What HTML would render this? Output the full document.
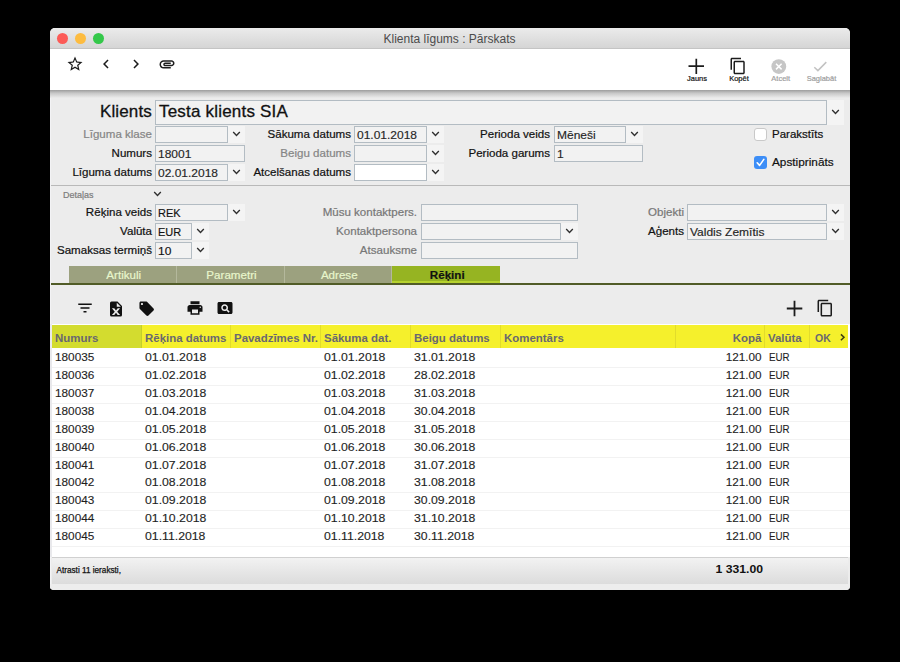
<!DOCTYPE html>
<html>
<head>
<meta charset="utf-8">
<title>Klienta līgums : Pārskats</title>
<style>
html,body{margin:0;padding:0;background:#000;}
body{width:900px;height:662px;position:relative;overflow:hidden;font-family:"Liberation Sans",sans-serif;font-size:12px;color:#111;}
*{box-sizing:border-box;}
.a{position:absolute;white-space:nowrap;}
#win{left:50px;top:28px;width:800px;height:562px;background:#ececec;border-radius:5px 5px 4px 4px;overflow:hidden;}
#tb{left:0;top:0;width:800px;height:21px;background:linear-gradient(#ebebeb,#d5d5d5);border-bottom:1px solid #c4c4c4;}
#title{left:0;top:0;width:799px;height:21px;line-height:23px;text-align:center;font-size:12px;color:#4b4b4b;}
.dot{width:11px;height:11px;border-radius:50%;top:5px;}
#tool{left:0;top:21px;width:800px;height:41px;background:#fff;}
#shade{left:0;top:62px;width:800px;height:8px;background:linear-gradient(#9d9d9d,#c8c8c8 40%,#ececec);}
.u{display:inline-block;}
.lbl{-webkit-text-stroke:0.2px currentColor;text-align:right;font-size:11px;height:17px;line-height:17px;color:#111;transform:scaleX(1.05);transform-origin:right center;}
.dis{color:#858585;}
.fld{height:17px;line-height:16px;border:1px solid #b3bcc3;background:#f2f2f2;font-size:11px;color:#262626;-webkit-text-stroke:0.15px currentColor;padding-left:2px;}
.w{display:inline-block;transform:scaleX(1.09);transform-origin:left center;}
.dd{width:17px;height:17px;background:#f4f4f4;}
svg{display:block;}
.sep{left:0;width:800px;height:1px;background:#b9b9b9;}
.tab{top:238px;height:17px;line-height:17px;text-align:center;padding-left:3px;font-size:11.6px;-webkit-text-stroke:0.2px currentColor;color:#e8f6cc;background:#9ca17f;border-right:1px solid #b4b89c;}
.th{top:297px;height:23px;line-height:27px;overflow:hidden;font-size:10.5px;font-weight:bold;color:#696870;background:#f5f02c;border-right:1px solid #e2dc2b;padding-left:3px;}
.row{left:2px;width:798px;height:18px;border-bottom:1px solid #f2f2f2;background:#fff;}
.c{top:-2px;height:18px;line-height:18px;font-size:10.8px;color:#1e1e1e;-webkit-text-stroke:0.12px currentColor;transform:scaleX(1.085);transform-origin:left center;}
.c.n{transform:scaleX(1.09);}
.c.d{transform:scaleX(1.135);}
.hw{display:inline-block;transform:scaleX(1.09);transform-origin:left center;}
.hw.r{transform-origin:right center;}
.tl{-webkit-text-stroke:0.2px currentColor;top:45.5px;width:60px;text-align:center;font-size:7.5px;height:10px;line-height:10px;}
</style>
</head>
<body>
<div id="win" class="a">
  <div id="tb" class="a"></div>
  <div id="title" class="a">Klienta līgums : Pārskats</div>
  <div class="a dot" style="left:7px;background:#fc5b57;"></div>
  <div class="a dot" style="left:25px;background:#fdbc40;"></div>
  <div class="a dot" style="left:43px;background:#34c84a;"></div>
  <div id="tool" class="a"></div>
  <div id="shade" class="a"></div>
  <div class="a" style="left:0;width:102px;top:72px;height:25px;line-height:24px;text-align:right;font-size:17px;letter-spacing:0.15px;-webkit-text-stroke:0.3px #111;color:#111;">Klients</div>
  <div class="a fld" style="left:105px;top:72px;width:672px;height:25px;line-height:22px;font-size:17px;letter-spacing:0.2px;-webkit-text-stroke:0.3px #111;color:#111;padding-left:3px;">Testa klients SIA</div>
  <div class="a dd" style="left:777px;top:72px;height:25px;"><i class="a" style="left:4px;top:9px;width:9px;height:6px;"><svg width="9" height="6" viewBox="0 0 9 6"><path d="M1.2 1.1 L4.5 4.4 L7.8 1.1" fill="none" stroke="#303030" stroke-width="1.4"/></svg></i></div>
  <div class="a lbl dis" style="left:0;width:102px;top:98px;">Līguma klase</div>
  <div class="a fld" style="left:105px;top:98px;width:73px;"><span class="w"></span></div>
  <div class="a dd" style="left:178px;top:98px;height:17px;"><i class="a" style="left:4px;top:5px;width:9px;height:6px;"><svg width="9" height="6" viewBox="0 0 9 6"><path d="M1.2 1.1 L4.5 4.4 L7.8 1.1" fill="none" stroke="#303030" stroke-width="1.4"/></svg></i></div>
  <div class="a lbl" style="left:0;width:102px;top:117px;">Numurs</div>
  <div class="a fld" style="left:105px;top:117px;width:90px;"><span class="w">18001</span></div>
  <div class="a lbl" style="left:0;width:102px;top:136px;">Līguma datums</div>
  <div class="a fld" style="left:105px;top:136px;width:73px;"><span class="w">02.01.2018</span></div>
  <div class="a dd" style="left:178px;top:136px;height:17px;"><i class="a" style="left:4px;top:5px;width:9px;height:6px;"><svg width="9" height="6" viewBox="0 0 9 6"><path d="M1.2 1.1 L4.5 4.4 L7.8 1.1" fill="none" stroke="#303030" stroke-width="1.4"/></svg></i></div>
  <div class="a lbl" style="left:0;width:301px;top:98px;">Sākuma datums</div>
  <div class="a fld" style="left:304px;top:98px;width:73px;"><span class="w">01.01.2018</span></div>
  <div class="a dd" style="left:377px;top:98px;height:17px;"><i class="a" style="left:4px;top:5px;width:9px;height:6px;"><svg width="9" height="6" viewBox="0 0 9 6"><path d="M1.2 1.1 L4.5 4.4 L7.8 1.1" fill="none" stroke="#303030" stroke-width="1.4"/></svg></i></div>
  <div class="a lbl dis" style="left:0;width:301px;top:117px;">Beigu datums</div>
  <div class="a fld" style="left:304px;top:117px;width:73px;"><span class="w"></span></div>
  <div class="a dd" style="left:377px;top:117px;height:17px;"><i class="a" style="left:4px;top:5px;width:9px;height:6px;"><svg width="9" height="6" viewBox="0 0 9 6"><path d="M1.2 1.1 L4.5 4.4 L7.8 1.1" fill="none" stroke="#303030" stroke-width="1.4"/></svg></i></div>
  <div class="a lbl" style="left:0;width:301px;top:136px;">Atcelšanas datums</div>
  <div class="a fld" style="left:304px;top:136px;width:73px;background:#fff;"><span class="w"></span></div>
  <div class="a dd" style="left:377px;top:136px;height:17px;"><i class="a" style="left:4px;top:5px;width:9px;height:6px;"><svg width="9" height="6" viewBox="0 0 9 6"><path d="M1.2 1.1 L4.5 4.4 L7.8 1.1" fill="none" stroke="#303030" stroke-width="1.4"/></svg></i></div>
  <div class="a lbl" style="left:0;width:500px;top:98px;">Perioda veids</div>
  <div class="a fld" style="left:504px;top:98px;width:72px;"><span class="w">Mēneši</span></div>
  <div class="a dd" style="left:576px;top:98px;height:17px;"><i class="a" style="left:4px;top:5px;width:9px;height:6px;"><svg width="9" height="6" viewBox="0 0 9 6"><path d="M1.2 1.1 L4.5 4.4 L7.8 1.1" fill="none" stroke="#303030" stroke-width="1.4"/></svg></i></div>
  <div class="a lbl" style="left:0;width:500px;top:117px;">Perioda garums</div>
  <div class="a fld" style="left:504px;top:117px;width:89px;"><span class="w">1</span></div>
  <div class="a" style="left:704px;top:100px;width:13px;height:13px;border-radius:3px;background:#fff;border:1px solid #c9c9c9;"></div>
  <div class="a" style="left:722px;top:98px;height:17px;line-height:17px;font-size:11.5px;-webkit-text-stroke:0.2px #111;color:#111;">Parakstīts</div>
  <div class="a" style="left:704px;top:128px;width:13px;height:13px;border-radius:3px;background:#3d8ef7;"><svg class="a" style="left:0;top:0" width="13" height="13" viewBox="0 0 13 13"><path d="M3.2 6.8 L5.6 9.4 L9.8 3.4" fill="none" stroke="#fff" stroke-width="1.6" stroke-linecap="round" stroke-linejoin="round"/></svg></div>
  <div class="a" style="left:722px;top:126px;height:17px;line-height:17px;font-size:11.8px;-webkit-text-stroke:0.2px #111;color:#111;">Apstiprināts</div>
  <div class="a sep" style="top:157px;"></div>
  <div class="a" style="left:13px;top:161px;height:12px;line-height:12px;font-size:9px;-webkit-text-stroke:0.2px #7c7c7c;color:#7c7c7c;">Detaļas</div>
  <i class="a" style="left:103px;top:163px;width:9px;height:6px;"><svg width="9" height="6" viewBox="0 0 9 6"><path d="M1.2 1.1 L4.5 4.4 L7.8 1.1" fill="none" stroke="#303030" stroke-width="1.4"/></svg></i>
  <div class="a lbl" style="left:0;width:102px;top:176px;">Rēķina veids</div>
  <div class="a fld" style="left:105px;top:176px;width:73px;color:#111;"><span class="u">REK</span></div>
  <div class="a dd" style="left:178px;top:176px;height:17px;"><i class="a" style="left:4px;top:5px;width:9px;height:6px;"><svg width="9" height="6" viewBox="0 0 9 6"><path d="M1.2 1.1 L4.5 4.4 L7.8 1.1" fill="none" stroke="#303030" stroke-width="1.4"/></svg></i></div>
  <div class="a lbl" style="left:0;width:102px;top:195px;">Valūta</div>
  <div class="a fld" style="left:105px;top:195px;width:37px;color:#111;"><span class="u">EUR</span></div>
  <div class="a dd" style="left:142px;top:195px;height:17px;"><i class="a" style="left:4px;top:5px;width:9px;height:6px;"><svg width="9" height="6" viewBox="0 0 9 6"><path d="M1.2 1.1 L4.5 4.4 L7.8 1.1" fill="none" stroke="#303030" stroke-width="1.4"/></svg></i></div>
  <div class="a lbl" style="left:0;width:102px;top:214px;">Samaksas termiņš</div>
  <div class="a fld" style="left:105px;top:214px;width:37px;color:#111;"><span class="w">10</span></div>
  <div class="a dd" style="left:142px;top:214px;height:17px;"><i class="a" style="left:4px;top:5px;width:9px;height:6px;"><svg width="9" height="6" viewBox="0 0 9 6"><path d="M1.2 1.1 L4.5 4.4 L7.8 1.1" fill="none" stroke="#303030" stroke-width="1.4"/></svg></i></div>
  <div class="a lbl dis" style="left:0;width:367px;top:176px;color:#777;">Mūsu kontaktpers.</div>
  <div class="a fld" style="left:371px;top:176px;width:157px;"><span class="w"></span></div>
  <div class="a lbl dis" style="left:0;width:367px;top:195px;color:#777;">Kontaktpersona</div>
  <div class="a fld" style="left:371px;top:195px;width:140px;"><span class="w"></span></div>
  <div class="a dd" style="left:511px;top:195px;height:17px;"><i class="a" style="left:4px;top:5px;width:9px;height:6px;"><svg width="9" height="6" viewBox="0 0 9 6"><path d="M1.2 1.1 L4.5 4.4 L7.8 1.1" fill="none" stroke="#303030" stroke-width="1.4"/></svg></i></div>
  <div class="a lbl dis" style="left:0;width:367px;top:214px;color:#777;">Atsauksme</div>
  <div class="a fld" style="left:371px;top:214px;width:157px;"><span class="w"></span></div>
  <div class="a lbl dis" style="left:0;width:634px;top:176px;color:#777;">Objekti</div>
  <div class="a fld" style="left:637px;top:176px;width:140px;"><span class="w"></span></div>
  <div class="a dd" style="left:777px;top:176px;height:17px;"><i class="a" style="left:4px;top:5px;width:9px;height:6px;"><svg width="9" height="6" viewBox="0 0 9 6"><path d="M1.2 1.1 L4.5 4.4 L7.8 1.1" fill="none" stroke="#303030" stroke-width="1.4"/></svg></i></div>
  <div class="a lbl" style="left:0;width:634px;top:195px;">Aģents</div>
  <div class="a fld" style="left:637px;top:195px;width:140px;"><span class="w">Valdis Zemītis</span></div>
  <div class="a dd" style="left:777px;top:195px;height:17px;"><i class="a" style="left:4px;top:5px;width:9px;height:6px;"><svg width="9" height="6" viewBox="0 0 9 6"><path d="M1.2 1.1 L4.5 4.4 L7.8 1.1" fill="none" stroke="#303030" stroke-width="1.4"/></svg></i></div>
  <div class="a tab" style="left:19px;width:107.5px;">Artikuli</div>
  <div class="a tab" style="left:126.5px;width:108.0px;">Parametri</div>
  <div class="a tab" style="left:234.5px;width:107.5px;">Adrese</div>
  <div class="a tab" style="left:342px;width:107.5px;background:#96b422;color:#111;font-weight:bold;border-right:0;border-bottom:2px solid #b6d22e;line-height:17px;">Rēķini</div>
  <div class="a" style="left:1px;top:255px;width:799px;height:2px;background:#515c27;"></div>
  <div class="a" style="left:0;top:70px;width:1px;height:492px;background:#f3f3f5;"></div>
  <svg class="a" style="left:16.2px;top:27px" width="18" height="18" viewBox="0 0 24 24"><path fill="#1c1c1c" d="M22 9.24l-7.19-.62L12 2 9.19 8.63 2 9.24l5.46 4.73L5.82 21 12 17.27 18.18 21l-1.63-7.03L22 9.24zM12 15.4l-3.76 2.27 1-4.28-3.32-2.88 4.38-.38L12 6.1l1.71 4.04 4.38.38-3.32 2.88 1 4.28L12 15.4z"/></svg>
  <svg class="a" style="left:46.9px;top:26.6px" width="18" height="18" viewBox="0 0 24 24"><path fill="#1c1c1c" d="M15.41 7.41L14 6l-6 6 6 6 1.41-1.41L10.83 12z"/></svg>
  <svg class="a" style="left:77.3px;top:26.6px" width="18" height="18" viewBox="0 0 24 24"><path fill="#1c1c1c" d="M10 6L8.59 7.41 13.17 12l-4.58 4.59L10 18l6-6z"/></svg>
  <svg class="a" style="left:107.8px;top:26.6px" width="18" height="18" viewBox="0 0 24 24"><path fill="#1c1c1c" d="M2 12.5C2 9.46 4.46 7 7.500 7H18c2.210 0 4 1.790 4 4s-1.790 4-4 4H9.500C8.120 15 7 13.880 7 12.500S8.120 10 9.500 10H17v2H9.410c-.55 0-.55 1 0 1H18c1.100 0 2-.9 2-2s-.9-2-2-2H7.500C5.570 9 4 10.570 4 12.500S5.570 16 7.500 16H17v2H7.500C4.460 18 2 15.540 2 12.500z"/></svg>
  <svg class="a" style="left:638px;top:30px" width="17" height="17" viewBox="0 0 17 17"><path d="M8.3 0.7V15.9M0.5 8.2H16" stroke="#1c1c1c" stroke-width="1.7" fill="none"/></svg>
  <div class="a tl" style="left:617px;color:#111;">Jauns</div>
  <svg class="a" style="left:678.5px;top:29.2px" width="18" height="18" viewBox="0 0 24 24"><path fill="#1c1c1c" d="M16 1H4c-1.100 0-2 .9-2 2v14h2V3h12V1zm3 4H8c-1.100 0-2 .9-2 2v14c0 1.100.9 2 2 2h11c1.100 0 2-.9 2-2V7c0-1.100-.9-2-2-2zm0 16H8V7h11v14z"/></svg>
  <div class="a tl" style="left:659px;color:#111;">Kopēt</div>
  <svg class="a" style="left:721px;top:30.5px" width="16" height="16" viewBox="0 0 16 16"><circle cx="7.8" cy="7.6" r="7.4" fill="#c6c6c6"/><path d="M5 4.8L10.600 10.400M10.600 4.800L5 10.400" stroke="#fff" stroke-width="1.5" fill="none"/></svg>
  <div class="a tl" style="left:700.7px;color:#9e9e9e;">Atcelt</div>
  <svg class="a" style="left:763px;top:33px" width="15" height="11" viewBox="0 0 15 11"><path d="M1.300 6.300L4.900 9.600L13.300 1.100" stroke="#c2c2c2" stroke-width="1.5" fill="none"/></svg>
  <div class="a tl" style="left:741.5px;color:#9e9e9e;">Saglabāt</div>
  <svg class="a" style="left:26.2px;top:271.1px" width="18" height="18" viewBox="0 0 24 24"><path fill="#111" d="M10 18h4v-2h-4v2zM3 6v2h18V6H3zm3 7h12v-2H6v2z"/></svg>
  <svg class="a" style="left:57px;top:271.7px" width="18" height="18" viewBox="0 0 24 24"><path fill="#111" fill-rule="evenodd" d="M14 2H6a2 2 0 0 0-2 2v16a2 2 0 0 0 2 2h12a2 2 0 0 0 2-2V8l-6-6zM13 9V3.500L18.500 9H13zM6.500 11h3.200L12 14 14.300 11h3.200l-3.900 4.500 3.900 4.500h-3.200L12 17 9.700 20H6.500l3.900-4.500z"/></svg>
  <svg class="a" style="left:87.55px;top:271.75px" width="17.4" height="17.4" viewBox="0 0 24 24"><path fill="#111" d="M21.410 11.580l-9-9C12.050 2.220 11.550 2 11 2H4c-1.100 0-2 .9-2 2v7c0 .55.22 1.050.59 1.420l9 9c.36.36.86.58 1.410.58.55 0 1.050-.22 1.410-.59l7-7c.37-.36.59-.86.59-1.410 0-.55-.23-1.060-.59-1.420zM5.500 7C4.670 7 4 6.330 4 5.500S4.670 4 5.500 4 7 4.670 7 5.500 6.330 7 5.500 7z"/></svg>
  <svg class="a" style="left:135.600px;top:271.4px" width="18" height="18" viewBox="0 0 24 24"><path fill="#111" d="M19 8H5c-1.660 0-3 1.340-3 3v6h4v4h12v-4h4v-6c0-1.660-1.340-3-3-3zm-3 11H8v-5h8v5zm3-7c-.55 0-1-.45-1-1s.45-1 1-1 1 .45 1 1-.45 1-1 1zm-1-9H6v4h12V3z"/></svg>
  <svg class="a" style="left:166.300px;top:271.2px" width="18" height="18" viewBox="0 0 24 24"><path fill="#111" d="M11.500 9C10.120 9 9 10.120 9 11.500s1.120 2.500 2.500 2.500 2.500-1.120 2.500-2.500S12.880 9 11.500 9zM20 4H4c-1.100 0-2 .9-2 2v12c0 1.100.9 2 2 2h16c1.100 0 2-.9 2-2V6c0-1.100-.9-2-2-2zm-3.210 14.210l-2.910-2.910c-.69.44-1.510.7-2.390.7C9.010 16 7 13.990 7 11.500S9.010 7 11.500 7 16 9.010 16 11.500c0 .88-.26 1.690-.7 2.390l2.910 2.900-1.420 1.420z"/></svg>
  <svg class="a" style="left:735.5px;top:272px" width="17" height="17" viewBox="0 0 17 17"><path d="M8.500 0.700V16.300M0.800 8.500H16.300" stroke="#1c1c1c" stroke-width="1.8" fill="none"/></svg>
  <svg class="a" style="left:765.600px;top:271.35px" width="18.3" height="18.3" viewBox="0 0 24 24"><path fill="#1c1c1c" d="M16 1H4c-1.100 0-2 .9-2 2v14h2V3h12V1zm3 4H8c-1.100 0-2 .9-2 2v14c0 1.100.9 2 2 2h11c1.100 0 2-.9 2-2V7c0-1.100-.9-2-2-2zm0 16H8V7h11v14z"/></svg>

  <div class="a" style="left:0;top:296px;width:800px;height:233px;background:#fff;"></div>
  <div class="a" style="left:0;top:296px;width:2px;height:233px;background:#e9e9ec;"></div>
  <div class="a th" style="left:2px;width:90px;background:#d3dc2f;border-right-color:#c5cf2b;"><span class="hw">Numurs</span></div>
  <div class="a th" style="left:92px;width:89px;"><span class="hw">Rēķina datums</span></div>
  <div class="a th" style="left:181px;width:90px;"><span class="hw">Pavadzīmes Nr.</span></div>
  <div class="a th" style="left:271px;width:90px;"><span class="hw">Sākuma dat.</span></div>
  <div class="a th" style="left:361px;width:90px;"><span class="hw">Beigu datums</span></div>
  <div class="a th" style="left:451px;width:175px;"><span class="hw">Komentārs</span></div>
  <div class="a th" style="left:626px;width:89px;text-align:right;padding-right:3px;"><span class="hw r">Kopā</span></div>
  <div class="a th" style="left:715px;width:45px;"><span class="hw">Valūta</span></div>
  <div class="a th" style="left:760px;width:38px;border-right:0;padding-left:5px;"><span class="">OK</span></div>
  <svg class="a" style="left:789px;top:305px" width="7" height="9" viewBox="0 0 7 9"><path d="M1.900 1.400L5 4.300L1.900 7.200" fill="none" stroke="#3c3c14" stroke-width="1.5"/></svg>
  <div class="a row" style="top:322.0px;"><span class="a c n" style="left:3.2px;">180035</span><span class="a c d" style="left:92.600px;">01.01.2018</span><span class="a c d" style="left:272.400px;">01.01.2018</span><span class="a c d" style="left:362.400px;">31.01.2018</span><span class="a c" style="left:610px;width:99.5px;text-align:right;transform-origin:right center;">121.00</span><span class="a c" style="left:717px;transform:scaleX(0.9);">EUR</span></div>
  <div class="a row" style="top:339.92px;"><span class="a c n" style="left:3.2px;">180036</span><span class="a c d" style="left:92.600px;">01.02.2018</span><span class="a c d" style="left:272.400px;">01.02.2018</span><span class="a c d" style="left:362.400px;">28.02.2018</span><span class="a c" style="left:610px;width:99.5px;text-align:right;transform-origin:right center;">121.00</span><span class="a c" style="left:717px;transform:scaleX(0.9);">EUR</span></div>
  <div class="a row" style="top:357.84px;"><span class="a c n" style="left:3.2px;">180037</span><span class="a c d" style="left:92.600px;">01.03.2018</span><span class="a c d" style="left:272.400px;">01.03.2018</span><span class="a c d" style="left:362.400px;">31.03.2018</span><span class="a c" style="left:610px;width:99.5px;text-align:right;transform-origin:right center;">121.00</span><span class="a c" style="left:717px;transform:scaleX(0.9);">EUR</span></div>
  <div class="a row" style="top:375.76px;"><span class="a c n" style="left:3.2px;">180038</span><span class="a c d" style="left:92.600px;">01.04.2018</span><span class="a c d" style="left:272.400px;">01.04.2018</span><span class="a c d" style="left:362.400px;">30.04.2018</span><span class="a c" style="left:610px;width:99.5px;text-align:right;transform-origin:right center;">121.00</span><span class="a c" style="left:717px;transform:scaleX(0.9);">EUR</span></div>
  <div class="a row" style="top:393.68px;"><span class="a c n" style="left:3.2px;">180039</span><span class="a c d" style="left:92.600px;">01.05.2018</span><span class="a c d" style="left:272.400px;">01.05.2018</span><span class="a c d" style="left:362.400px;">31.05.2018</span><span class="a c" style="left:610px;width:99.5px;text-align:right;transform-origin:right center;">121.00</span><span class="a c" style="left:717px;transform:scaleX(0.9);">EUR</span></div>
  <div class="a row" style="top:411.6px;"><span class="a c n" style="left:3.2px;">180040</span><span class="a c d" style="left:92.600px;">01.06.2018</span><span class="a c d" style="left:272.400px;">01.06.2018</span><span class="a c d" style="left:362.400px;">30.06.2018</span><span class="a c" style="left:610px;width:99.5px;text-align:right;transform-origin:right center;">121.00</span><span class="a c" style="left:717px;transform:scaleX(0.9);">EUR</span></div>
  <div class="a row" style="top:429.52px;"><span class="a c n" style="left:3.2px;">180041</span><span class="a c d" style="left:92.600px;">01.07.2018</span><span class="a c d" style="left:272.400px;">01.07.2018</span><span class="a c d" style="left:362.400px;">31.07.2018</span><span class="a c" style="left:610px;width:99.5px;text-align:right;transform-origin:right center;">121.00</span><span class="a c" style="left:717px;transform:scaleX(0.9);">EUR</span></div>
  <div class="a row" style="top:447.44px;"><span class="a c n" style="left:3.2px;">180042</span><span class="a c d" style="left:92.600px;">01.08.2018</span><span class="a c d" style="left:272.400px;">01.08.2018</span><span class="a c d" style="left:362.400px;">31.08.2018</span><span class="a c" style="left:610px;width:99.5px;text-align:right;transform-origin:right center;">121.00</span><span class="a c" style="left:717px;transform:scaleX(0.9);">EUR</span></div>
  <div class="a row" style="top:465.36px;"><span class="a c n" style="left:3.2px;">180043</span><span class="a c d" style="left:92.600px;">01.09.2018</span><span class="a c d" style="left:272.400px;">01.09.2018</span><span class="a c d" style="left:362.400px;">30.09.2018</span><span class="a c" style="left:610px;width:99.5px;text-align:right;transform-origin:right center;">121.00</span><span class="a c" style="left:717px;transform:scaleX(0.9);">EUR</span></div>
  <div class="a row" style="top:483.28px;"><span class="a c n" style="left:3.2px;">180044</span><span class="a c d" style="left:92.600px;">01.10.2018</span><span class="a c d" style="left:272.400px;">01.10.2018</span><span class="a c d" style="left:362.400px;">31.10.2018</span><span class="a c" style="left:610px;width:99.5px;text-align:right;transform-origin:right center;">121.00</span><span class="a c" style="left:717px;transform:scaleX(0.9);">EUR</span></div>
  <div class="a row" style="top:501.2px;"><span class="a c n" style="left:3.2px;">180045</span><span class="a c d" style="left:92.600px;">01.11.2018</span><span class="a c d" style="left:272.400px;">01.11.2018</span><span class="a c d" style="left:362.400px;">30.11.2018</span><span class="a c" style="left:610px;width:99.5px;text-align:right;transform-origin:right center;">121.00</span><span class="a c" style="left:717px;transform:scaleX(0.9);">EUR</span></div>
  <div class="a" style="left:2px;top:529px;width:796px;height:27px;background:linear-gradient(#f2f2f2,#dcdcdc);border-top:1px solid #d0d0d0;"></div>
  <div class="a" style="left:0;top:556px;width:800px;height:6px;background:#ededed;"></div>
  <div class="a" style="left:6.5px;top:536px;height:14px;line-height:14px;font-size:8.2px;-webkit-text-stroke:0.25px #111;color:#111;">Atrasti 11 ieraksti,</div>
  <div class="a" style="left:612px;width:101px;top:533px;height:16px;line-height:16px;font-size:10.8px;font-weight:bold;text-align:right;color:#111;transform:scaleX(1.13);transform-origin:right center;">1 331.00</div>
</div>
</body>
</html>
